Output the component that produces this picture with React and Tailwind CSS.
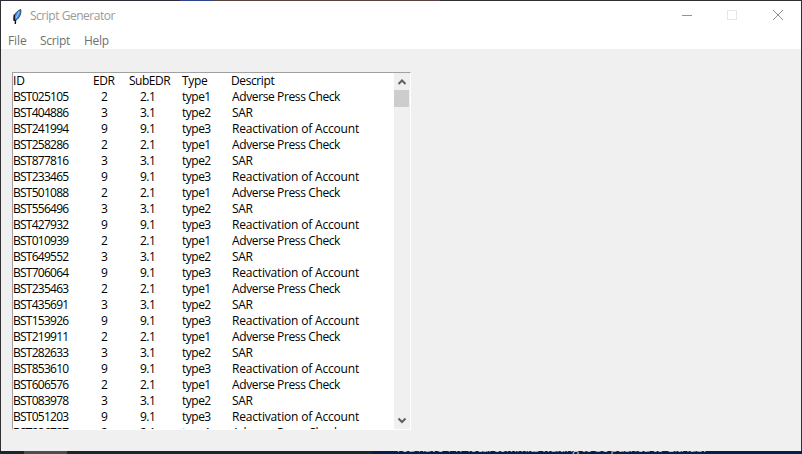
const ids = [
  'BST025105', 'BST404886', 'BST241994', 'BST258286', 'BST877816', 'BST233465',
  'BST501088', 'BST556496', 'BST427932', 'BST010939', 'BST649552', 'BST706064',
  'BST235463', 'BST435691', 'BST153926', 'BST219911', 'BST282633', 'BST853610',
  'BST606576', 'BST083978', 'BST051203', 'BST826727',
];

const kinds = [
  { edr: '2', sub: '2.1', type: 'type1', text: 'Adverse Press Check', spacing: 'tracking-[-0.38px]' },
  { edr: '3', sub: '3.1', type: 'type2', text: 'SAR', spacing: 'tracking-[-0.3px]' },
  { edr: '9', sub: '9.1', type: 'type3', text: 'Reactivation of Account', spacing: 'tracking-[-0.18px]' },
];

function Feather() {
  return (
    <svg width="12" height="17" viewBox="0 0 12 17" className="shrink-0">
      <path d="M3.300 12C2.200 8.500 4.500 3.500 9.700 1.500c.8 3.800-1 8.300-4.700 10.700z" fill="#3b8be0" stroke="#24364f" strokeWidth="0.900" />
      <path d="M8.300 3.500L5 10" stroke="#8cc6ff" strokeWidth="1.200" />
      <path d="M3.300 6.500L3 12L4.500 12.800L4.300 16" stroke="#10131c" strokeWidth="1.400" fill="none" />
    </svg>
  );
}

function TitleBar() {
  return (
    <div className="flex h-[30px] items-center bg-white pl-[10px]">
      <Feather />
      <span className="ml-[7px] text-[12px] leading-4 tracking-[-0.48px] text-[#999b96]">Script Generator</span>
      <svg width="104" height="12" viewBox="0 0 104 12" className="mr-[15px] mb-[2px] ml-auto" fill="none">
        <path d="M0 6.500h10" stroke="#949494" />
        <rect x="45.500" y="1.500" width="9" height="9" stroke="#e6e6e6" />
        <path d="M91 1l10 10M101 1L91 11" stroke="#8f8f8f" />
      </svg>
    </div>
  );
}

function Row({ kind, id }) {
  return (
    <div className="flex h-4 leading-4 whitespace-pre">
      <span className="w-[88px] tracking-[-0.74px]">{id}</span>
      <span className="w-[39px]">{kind.edr}</span>
      <span className="w-[42px] tracking-[-0.55px]">{kind.sub}</span>
      <span className="w-[50px] tracking-[-0.5px]">{kind.type}</span>
      <span className={kind.spacing}>{kind.text}</span>
    </div>
  );
}

function ScrollBar() {
  return (
    <div className="flex w-[16px] shrink-0 flex-col items-center bg-[#f0f0f0]">
      <svg width="16" height="17" viewBox="0 0 16 17" fill="none">
        <path d="M4.500 11L8 7.500l3.500 3.500" stroke="#606060" strokeWidth="2" />
      </svg>
      <div className="h-[17px] w-[15px] self-start bg-[#cdcdcd]" />
      <svg width="16" height="17" viewBox="0 0 16 17" fill="none" className="mt-auto">
        <path d="M4.500 6.500L8 10l3.500-3.500" stroke="#606060" strokeWidth="2" />
      </svg>
    </div>
  );
}

export default function App() {
  return (
    <div className="flex h-[454px] w-[802px] flex-col overflow-hidden bg-[#303034] font-['Open_Sans','Noto_Sans',sans-serif] text-[12px] text-black">
      <div className="flex h-px shrink-0">
        <div className="w-[180px] bg-[#302a36]" />
        <div className="w-[34px] bg-[#30418c]" />
        <div className="w-[226px] bg-[#58413f]" />
        <div className="flex-1 bg-[#303033]" />
      </div>
      <div className="ml-px flex h-[450px] w-[800px] shrink-0 flex-col bg-[#f0f0f0]">
        <TitleBar />
        <div className="flex h-[18px] bg-white pl-[7px] leading-[19px] text-[#707070]">
          <span className="w-[32px] tracking-[-0.1px]">File</span>
          <span className="w-[44px] tracking-[-0.3px]">Script</span>
          <span className="tracking-[-0.25px]">Help</span>
        </div>
        <div className="mt-[23px] ml-[11px] flex h-[358px] w-[399px] overflow-hidden border border-t-[#a0a0a0] border-r-white border-b-white border-l-[#a0a0a0] bg-white">
          <div className="min-w-0 flex-1 overflow-hidden">
            <div className="flex h-4 leading-4">
              <span className="w-[80px]">ID</span>
              <span className="w-[36px] tracking-[-0.5px]">EDR</span>
              <span className="w-[53px] tracking-[-0.5px]">SubEDR</span>
              <span className="w-[49px] tracking-[-0.3px]">Type</span>
              <span className="tracking-[-0.4px]">Descript</span>
            </div>
            {ids.map((id, i) => <Row key={id} id={id} kind={kinds[i % 3]} />)}
          </div>
          <ScrollBar />
        </div>
      </div>
      <div className="flex h-[3px] shrink-0 overflow-hidden bg-[#1b252d]">
        <div className="ml-[24px] h-[3px] w-[43px] bg-[#514d4b]" />
        <div className="ml-auto flex h-[3px] w-[430px] items-end overflow-hidden bg-[#03204a] pl-[23px]">
          <span className="h-[6px] leading-[0px] tracking-[-0.43px] whitespace-nowrap text-[#cccccc]">You have 147 local commits waiting to be pushed to GitHub.</span>
        </div>
      </div>
    </div>
  );
}
